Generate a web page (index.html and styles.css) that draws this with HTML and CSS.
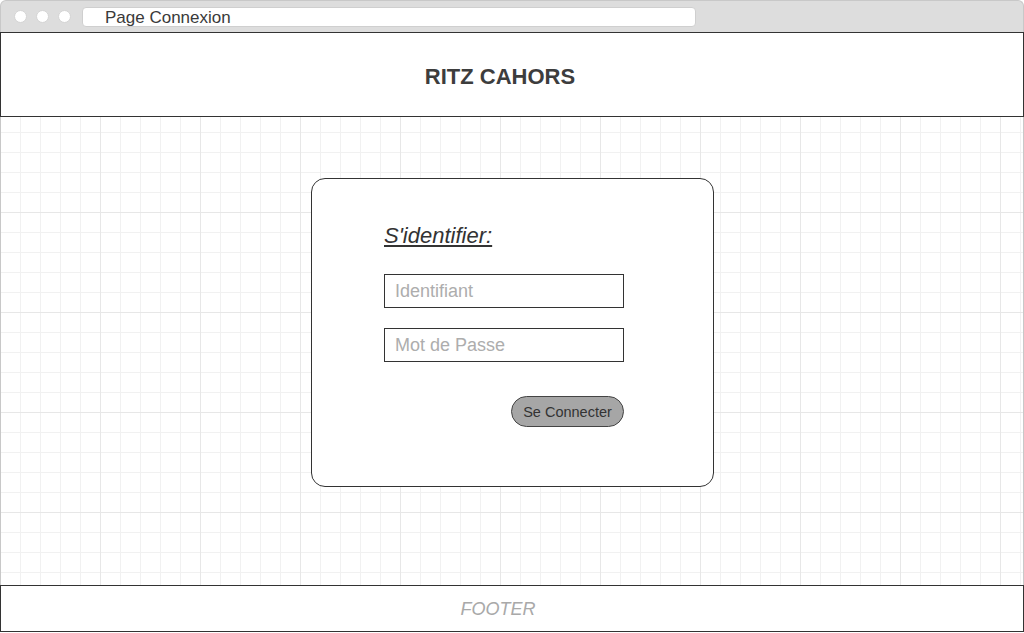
FILE: index.html
```html
<!DOCTYPE html>
<html lang="fr">
<head>
<meta charset="utf-8">
<title>Page Connexion</title>
<link rel="stylesheet" href="styles.css">
</head>
<body>
<div class="window">
  <div class="titlebar">
    <span class="dot"></span>
    <span class="dot"></span>
    <span class="dot"></span>
    <div class="address">Page Connexion</div>
  </div>
  <header class="header">
    <h1 class="brand">RITZ CAHORS</h1>
  </header>
  <main class="main">
    <section class="card">
      <form class="form">
        <h2 class="form-title">S'identifier:</h2>
        <input class="field field-first" type="text" placeholder="Identifiant">
        <input class="field field-second" type="password" placeholder="Mot de Passe">
        <button class="submit" type="button">Se Connecter</button>
      </form>
    </section>
  </main>
  <footer class="footer">FOOTER</footer>
</div>
</body>
</html>
```

FILE: styles.css
```css
html, body {
  margin: 0;
  padding: 0;
}
body {
  width: 1024px;
  height: 633px;
  overflow: hidden;
  background: #ffffff;
  font-family: "Liberation Sans", Arial, sans-serif;
  color: #333333;
}
.window {
  display: flex;
  flex-direction: column;
  width: 1024px;
}
.titlebar {
  height: 32px;
  box-sizing: border-box;
  background: #dddddd;
  border: 1px solid #c8c8c8;
  border-bottom: none;
  border-radius: 6px 6px 0 0;
  display: flex;
  align-items: center;
  padding-left: 12.5px;
  gap: 9px;
}
.dot {
  width: 13px;
  height: 13px;
  border-radius: 50%;
  background: #ffffff;
  box-sizing: border-box;
  border: 1px solid #d4d4d4;
  flex: none;
}
.address {
  margin-left: 2.5px;
  width: 614px;
  height: 20px;
  box-sizing: border-box;
  background: #ffffff;
  border: 1px solid #cfcfcf;
  border-radius: 4px;
  padding-left: 22px;
  padding-top: 1px;
  font-size: 17px;
  line-height: 18px;
  color: #3a3a3a;
}
.header {
  height: 85px;
  box-sizing: border-box;
  border: 1px solid #333333;
  background: #ffffff;
  display: flex;
  align-items: center;
  justify-content: center;
  padding-right: 24px;
  padding-top: 5px;
}
.brand {
  margin: 0;
  font-size: 22px;
  font-weight: bold;
  color: #3d3d3d;
  line-height: 26px;
}
.main {
  height: 468px;
  box-sizing: border-box;
  border-left: 1px solid #c8c8c8;
  border-right: 1px solid #c8c8c8;
  background:
    linear-gradient(to right, #e7e7e7 1px, transparent 1px) 0 0 / 100px 100px,
    linear-gradient(to bottom, #e7e7e7 1px, transparent 1px) 0 95px / 100px 100px,
    linear-gradient(to right, #f1f1f1 1px, transparent 1px) 0 0 / 20px 20px,
    linear-gradient(to bottom, #f1f1f1 1px, transparent 1px) 0 15px / 20px 20px,
    #ffffff;
  background-origin: border-box;
  display: flex;
  justify-content: center;
  align-items: flex-start;
  padding-top: 61px;
}
.card {
  width: 403px;
  height: 309px;
  box-sizing: border-box;
  border: 1px solid #333333;
  border-radius: 14px;
  background: #ffffff;
  padding: 44px 0 0 72px;
  margin-left: 1px;
}
.form {
  width: 240px;
  display: flex;
  flex-direction: column;
}
.form-title {
  margin: 0;
  font-size: 22px;
  line-height: 26px;
  font-weight: normal;
  font-style: italic;
  text-decoration: underline;
  text-decoration-thickness: 2px;
  text-underline-offset: 2px;
  color: #333333;
}
.field {
  width: 240px;
  height: 34px;
  box-sizing: border-box;
  border: 1px solid #333333;
  border-radius: 0;
  padding: 0 10px;
  font-family: "Liberation Sans", Arial, sans-serif;
  font-size: 18px;
  color: #333333;
  background: #ffffff;
  outline: none;
}
.field::placeholder {
  color: #adadad;
  opacity: 1;
}
.field-first {
  margin-top: 25px;
}
.field-second {
  margin-top: 20px;
}
.submit {
  align-self: flex-end;
  margin-top: 34px;
  width: 113px;
  height: 31px;
  box-sizing: border-box;
  border: 1px solid #444444;
  border-radius: 16px;
  background: #a6a6a6;
  font-family: "Liberation Sans", Arial, sans-serif;
  font-size: 14.5px;
  color: #333333;
  padding: 0;
}
.footer {
  height: 47px;
  box-sizing: border-box;
  border: 1px solid #333333;
  background: #ffffff;
  display: flex;
  align-items: center;
  justify-content: center;
  padding-right: 28px;
  padding-top: 2px;
  font-size: 18px;
  font-style: italic;
  color: #a9a9a9;
}
```
